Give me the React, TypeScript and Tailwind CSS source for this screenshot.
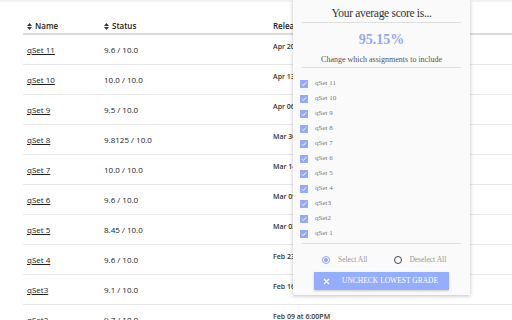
import React from "react";

const rows = [
  { name: "qSet 11", status: "9.6 / 10.0", date: "Apr 20 at 6:00PM" },
  { name: "qSet 10", status: "10.0 / 10.0", date: "Apr 13 at 6:00PM" },
  { name: "qSet 9", status: "9.5 / 10.0", date: "Apr 06 at 6:00PM" },
  { name: "qSet 8", status: "9.8125 / 10.0", date: "Mar 30 at 6:00PM" },
  { name: "qSet 7", status: "10.0 / 10.0", date: "Mar 14 at 6:00PM" },
  { name: "qSet 6", status: "9.6 / 10.0", date: "Mar 09 at 6:00PM" },
  { name: "qSet 5", status: "8.45 / 10.0", date: "Mar 02 at 6:00PM" },
  { name: "qSet 4", status: "9.6 / 10.0", date: "Feb 23 at 6:00PM" },
  { name: "qSet3", status: "9.1 / 10.0", date: "Feb 16 at 6:00PM" },
  { name: "qSet2", status: "9.7 / 10.0", date: "Feb 09 at 6:00PM" },
];

const items = ["qSet 11", "qSet 10", "qSet 9", "qSet 8", "qSet 7", "qSet 6", "qSet 5", "qSet 4", "qSet3", "qSet2", "qSet 1"];

function SortIcon() {
  return (
    <svg width="5" height="7" viewBox="0 0 5 7" className="mr-[3px]">
      <path d="M0 3 L2.5 0 L5 3 Z" fill="#333" />
      <path d="M0 4 L2.5 7 L5 4 Z" fill="#333" />
    </svg>
  );
}

function Check() {
  return (
    <div className="w-[8px] h-[8px] bg-[#94aaf8] flex items-center justify-center">
      <svg width="6" height="6" viewBox="0 0 6 6">
        <path d="M1 3.2 L2.4 4.6 L5 1.4" stroke="white" strokeWidth="0.9" fill="none" />
      </svg>
    </div>
  );
}

export default function App() {
  return (
    <div className="relative w-[512px] h-[320px] overflow-hidden bg-white" style={{ fontFamily: '"Open Sans", sans-serif' }}>
      <div className="h-[2px] bg-[#f3f3f3]" />
      <div className="ml-[23px]">
        <div className="h-[33px] flex items-end pb-[1px] border-b-[2px] border-[#dcdcdc] text-[8px] font-semibold text-[#222]">
          <div className="w-[81px] pl-[4px] flex items-center"><SortIcon />Name</div>
          <div className="w-[169px] flex items-center"><SortIcon />Status</div>
          <div>Release</div>
        </div>
        {rows.map((r) => (
          <div key={r.name} className="h-[30px] flex border-b border-[#e8e8e8] text-[8px] text-[#222]">
            <div className="w-[81px] pl-[4px] flex items-center">
              <span className="underline">{r.name}</span>
            </div>
            <div className="w-[169px] flex items-center">{r.status}</div>
            <div className="pt-[7px] text-[7px] font-semibold text-[#333]">{r.date}</div>
          </div>
        ))}
      </div>

      <div
        className="absolute left-[293px] top-0 w-[177px] h-[295px] bg-[#fafafa] shadow-[0_1px_4px_rgba(0,0,0,0.25)] px-[9px] flex flex-col"
        style={{ fontFamily: '"Liberation Serif", serif' }}
      >
        <div className="h-[23px] flex items-center justify-center pt-[6px] text-[11.5px] tracking-[-0.3px] text-[#333] border-b border-[#dedede] whitespace-nowrap">
          Your average score is...
        </div>
        <div className="h-[33px] flex items-center justify-center text-[14px] font-bold text-[#90a8f7]">
          95.15%
        </div>
        <div className="h-[8px] flex items-center justify-center text-[8px] text-[#555] border-b border-[#dedede] pb-[3px] box-content whitespace-nowrap">
          Change which assignments to include
        </div>
        <div className="flex flex-col pt-[8px] -ml-[2px]">
          {items.map((it) => (
            <div key={it} className="h-[15px] flex items-center">
              <Check />
              <span className="ml-[7px] text-[7px] leading-none text-[#777]">{it}</span>
            </div>
          ))}
        </div>
        <div className="mt-[2px] border-b border-[#dedede]" />
        <div className="mt-[4px] h-[24px] flex items-center text-[7.5px] leading-none text-[#999] whitespace-nowrap">
          <div className="ml-[20px] flex items-center">
            <div className="w-[8px] h-[8px] rounded-full border border-[#8fa6f7] flex items-center justify-center">
              <div className="w-[4px] h-[4px] rounded-full bg-[#8fa6f7]" />
            </div>
            <span className="ml-[8px]">Select All</span>
          </div>
          <div className="ml-[27px] flex items-center">
            <div className="w-[8px] h-[8px] rounded-full border border-[#444]" />
            <span className="ml-[7px]">Deselect All</span>
          </div>
        </div>
        <div className="ml-[12px] w-[135px] h-[18px] bg-[#94adfd] shadow-[0_1px_2px_rgba(0,0,0,0.2)] flex items-center text-white text-[7.5px] leading-none whitespace-nowrap">
          <svg width="7" height="7" viewBox="0 0 7 7" className="ml-[9px]">
            <path d="M1 1 L6 6 M6 1 L1 6" stroke="white" strokeWidth="1.1" />
          </svg>
          <span className="ml-[12px]">UNCHECK LOWEST GRADE</span>
        </div>
      </div>
    </div>
  );
}
